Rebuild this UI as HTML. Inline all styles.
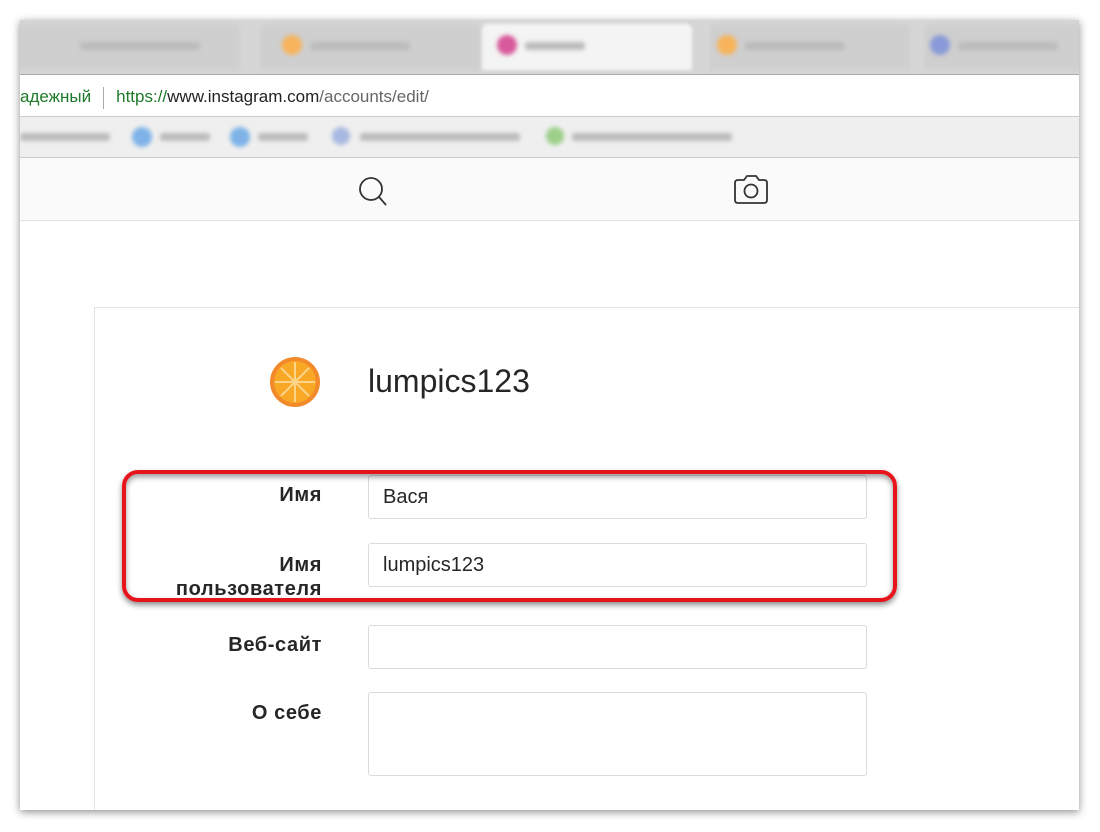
<!DOCTYPE html>
<html><head><meta charset="utf-8"><style>
*{margin:0;padding:0;box-sizing:border-box}
html,body{width:1100px;height:832px;overflow:hidden}
body{background:#fff;position:relative;font-family:"Liberation Sans",Arial,sans-serif}
.frame{position:absolute;left:20px;top:20px;width:1059px;height:790px;background:#fff;box-shadow:0 2px 8px rgba(0,0,0,.45);overflow:hidden}
.tabs{position:absolute;left:0;top:0;width:100%;height:54px;background:#d6d6d6}
.tab{position:absolute;top:4px;height:46px;background:#cfcfcf;border-radius:6px 6px 0 0;filter:blur(1.5px)}
.tab.a{background:#f4f4f4}
.blob{position:absolute;border-radius:50%;filter:blur(2px)}
.bar{position:absolute;background:#bbb;filter:blur(2px);height:8px;border-radius:3px}
.addr{position:absolute;left:0;top:54px;width:100%;height:43px;background:#fff;border-top:1px solid #aaa;border-bottom:1px solid #ccc;font-size:17px;line-height:43px;color:#333}
.bm{position:absolute;left:0;top:97px;width:100%;height:41px;background:#efefef;border-bottom:1px solid #ccc}
.nav{position:absolute;left:0;top:138px;width:100%;height:63px;background:#fafafa;border-bottom:1px solid #e3e3e3}
.card{position:absolute;left:74px;top:287px;width:1000px;height:520px;border:1px solid #e3e3e3;background:#fff}
.lbl{position:absolute;right:771px;font-weight:bold;font-size:20px;letter-spacing:0.6px;color:#262626;text-align:right;line-height:22px;white-space:nowrap}
.inp{position:absolute;left:273px;width:499px;border:1px solid #dbdbdb;border-radius:3px;background:#fff;font-size:20px;color:#262626;padding-left:14px}
.red{position:absolute;left:102px;top:450px;width:775px;height:132px;border:4px solid #e8141c;border-radius:16px;box-shadow:0 3px 6px rgba(0,0,0,.45), inset 0 3px 6px rgba(0,0,0,.4)}
</style></head><body>
<div class="frame">
 <div class="tabs">
  <div class="tab" style="left:-10px;width:230px"></div>
  <div class="tab" style="left:240px;width:220px"></div>
  <div class="tab a" style="left:462px;width:210px"></div>
  <div class="tab" style="left:690px;width:200px"></div>
  <div class="tab" style="left:905px;width:170px"></div>
  <div class="bar" style="left:60px;top:22px;width:120px"></div>
  <div class="blob" style="left:262px;top:15px;width:20px;height:20px;background:#f7b45c"></div><div class="bar" style="left:290px;top:22px;width:100px"></div>
  <div class="blob" style="left:477px;top:15px;width:20px;height:20px;background:#d85a9c"></div><div class="bar" style="left:505px;top:22px;width:60px"></div>
  <div class="blob" style="left:697px;top:15px;width:20px;height:20px;background:#f7b45c"></div><div class="bar" style="left:725px;top:22px;width:100px"></div>
  <div class="blob" style="left:910px;top:15px;width:20px;height:20px;background:#8a9ad8"></div><div class="bar" style="left:938px;top:22px;width:100px"></div>
 </div>
 <div class="addr"><span style="color:#1e7a2a">адежный</span><span style="display:inline-block;width:1px;height:22px;background:#aaa;margin:0 12px;vertical-align:middle"></span><span style="color:#1e7a2a">https://</span><span style="color:#222">www.instagram.com</span><span style="color:#666">/accounts/edit/</span></div>
 <div class="bm">
  <div class="bar" style="left:0;top:16px;width:90px"></div>
  <div class="blob" style="left:112px;top:10px;width:20px;height:20px;background:#7fb3e8"></div><div class="bar" style="left:140px;top:16px;width:50px"></div>
  <div class="blob" style="left:210px;top:10px;width:20px;height:20px;background:#7fb3e8"></div><div class="bar" style="left:238px;top:16px;width:50px"></div>
  <div class="blob" style="left:312px;top:10px;width:18px;height:18px;background:#a8b8e0"></div><div class="bar" style="left:340px;top:16px;width:160px"></div>
  <div class="blob" style="left:526px;top:10px;width:18px;height:18px;background:#9ccf8a"></div><div class="bar" style="left:552px;top:16px;width:160px"></div>
 </div>
 <div class="nav">
  <svg style="position:absolute;left:334px;top:17px" width="40" height="34" viewBox="0 0 40 34"><circle cx="17" cy="14" r="11" fill="none" stroke="#333" stroke-width="1.8"/><line x1="25" y1="22" x2="32" y2="30" stroke="#333" stroke-width="1.8"/></svg>
  <svg style="position:absolute;left:712px;top:16px" width="38" height="32" viewBox="0 0 38 32"><path d="M3 9 Q3 6 6 6 L12 6 L15 2 L24 2 L27 6 L32 6 Q35 6 35 9 L35 26 Q35 29 32 29 L6 29 Q3 29 3 26 Z" fill="none" stroke="#333" stroke-width="1.8"/><circle cx="19" cy="17" r="6.5" fill="none" stroke="#333" stroke-width="1.8"/></svg>
 </div>
 <div class="card">
  <svg style="position:absolute;left:173px;top:47px" width="54" height="54" viewBox="0 0 54 54"><circle cx="27" cy="27" r="25" fill="#f28a2c"/><circle cx="27" cy="27" r="21" fill="#f9a826"/><g stroke="#fcd58a" stroke-width="2"><line x1="27" y1="7" x2="27" y2="47"/><line x1="7" y1="27" x2="47" y2="27"/><line x1="13" y1="13" x2="41" y2="41"/><line x1="41" y1="13" x2="13" y2="41"/></g><circle cx="27" cy="27" r="3" fill="#fcd58a"/></svg>
  <div style="position:absolute;left:273px;top:55px;font-size:32px;color:#262626">lumpics123</div>
  <div class="lbl" style="top:176px">Имя</div>
  <div class="inp" style="top:167px;height:44px;line-height:42px">Вася</div>
  <div class="lbl" style="top:245px;line-height:24px">Имя<br>пользователя</div>
  <div class="inp" style="top:235px;height:44px;line-height:42px">lumpics123</div>
  <div class="lbl" style="top:326px">Веб-сайт</div>
  <div class="inp" style="top:317px;height:44px"></div>
  <div class="lbl" style="top:394px">О себе</div>
  <div class="inp" style="top:384px;height:84px"></div>
 </div>
 <div class="red"></div>
</div>
</body></html>
